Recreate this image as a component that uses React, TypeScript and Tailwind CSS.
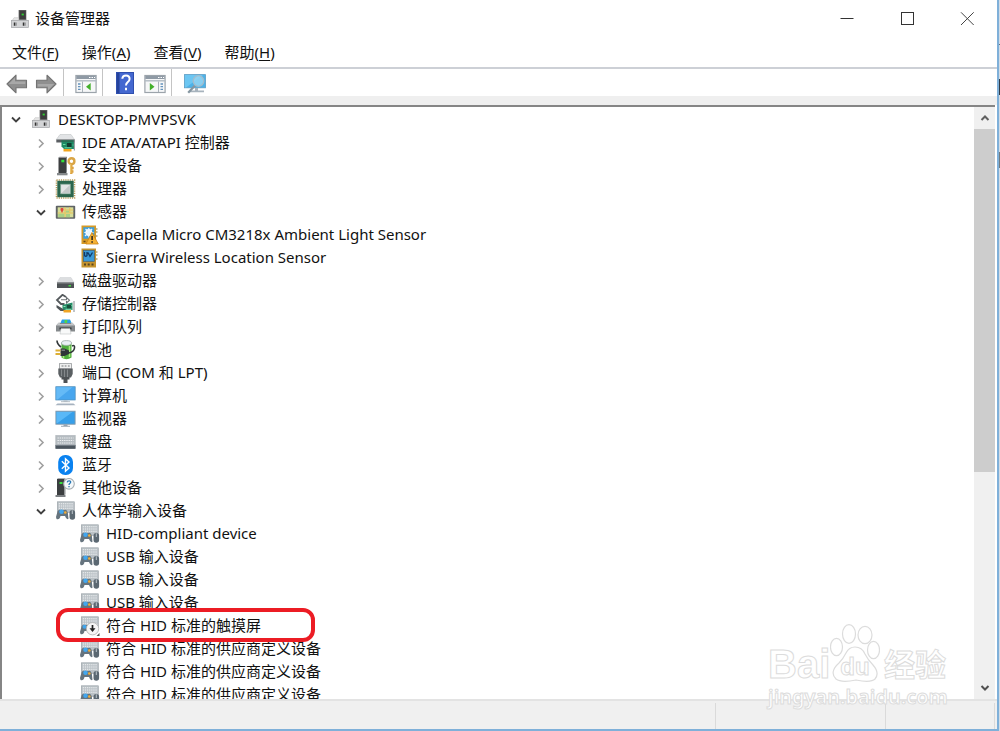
import React from "react";

type IconProps = { className?: string };
type IconType = (props: IconProps) => React.JSX.Element;

function Svg({ children, className = "h-5 w-[21px]" }: { children: React.ReactNode; className?: string }) {
  return (
    <svg viewBox="0 0 20 20" className={`block shrink-0 ${className}`} aria-hidden="true">
      {children}
    </svg>
  );
}

const ComputerRoot: IconType = ({ className }) => (
  <Svg className={className}>
    <rect x="8.5" y="0" width="8.5" height="11.5" fill="#5c5c5c" />
    <rect x="9.5" y="1" width="6.8" height="9.5" fill="#3d3d3d" />
    <rect x="11.8" y="4" width="2.4" height="2" fill="#2fd02f" />
    <path d="M3.5 8.5H8.5V11H17L19 12H1Z" fill="#e6e6e6" stroke="#b8b8b8" strokeWidth=".5" />
    <rect x=".5" y="11.5" width="19" height="8" fill="#d3d4d6" stroke="#a4a5a8" strokeWidth=".8" />
    <path d="M4 13.8v3.6M14 13.8v3.6" stroke="#333" strokeWidth="1.8" />
    <path d="M5.8 13.8v3.6M15.8 13.8v3.6" stroke="#8f9092" strokeWidth="1.2" />
  </Svg>
);

const IdeIcon: IconType = () => (
  <Svg>
    <path d="M4.5 1.5H15.5L19 6.5H.8Z" fill="#e2e4e6" stroke="#b9bdbf" strokeWidth=".5" />
    <path d="M.8 6.5H19V9.5H.8Z" fill="#5a5e62" />
    <path d="M6 7.5H18.5V16H8.5L6 13.5Z" fill="#1d8a64" />
    <path d="M6 7.5H18.5V9H6Z" fill="#2b6f55" />
    <rect x="11.5" y="10" width="4.5" height="4" fill="#123d30" />
    <path d="M7.5 11.5h2.5M17 12h1M9 14.8h7" stroke="#6ad9a5" strokeWidth="1" />
    <path d="M8 16H16V18.5H8Z" fill="#f0a51e" />
    <path d="M18.8 6.5V17.5" stroke="#858b8f" strokeWidth="1" />
  </Svg>
);

const SecurityIcon: IconType = () => (
  <Svg>
    <path d="M3 1.5H10.5V17H3Z" fill="#3c3f40" />
    <path d="M3 1.5L4 .8H11.5V16.5L10.5 17V1.5Z" fill="#85898b" />
    <rect x="5.8" y="3.8" width="3" height="2.5" fill="#31e33b" />
    <path d="M1.5 17H12V19.3H1.5Z" fill="#85898b" />
    <circle cx="16" cy="5.2" r="2.9" fill="none" stroke="#d9a545" strokeWidth="2.4" />
    <path d="M15.8 8V18M16 12H18.2M16 15.5H18" stroke="#dca341" strokeWidth="2.4" />
    <path d="M15.2 8V17" stroke="#f2cf78" strokeWidth=".8" />
  </Svg>
);

const CpuIcon: IconType = () => (
  <Svg>
    <rect x="1" y="1" width="18" height="18" fill="none" stroke="#b89b58" strokeWidth="1.6" strokeDasharray="1.2 1" />
    <rect x="1.8" y="1.8" width="16.4" height="16.4" fill="#2b664d" />
    <rect x="5.2" y="5.2" width="9.6" height="9.6" fill="#e3e5e5" stroke="#87ab9b" strokeWidth=".7" />
    <path d="M6 14.3L14.3 6V14.3Z" fill="#c4c9c9" />
  </Svg>
);

const SensorGroupIcon: IconType = () => (
  <Svg>
    <rect x=".3" y="3.8" width="19.4" height="13" rx="1" fill="#5f6366" />
    <rect x="2.2" y="5.3" width="15.6" height="10" fill="#d6dd9a" />
    <path d="M9.5 5.3V15.3M2.2 11H17.8M14.3 5.3V11M9.5 8H17.8" stroke="#e8c45c" strokeWidth="1.1" />
    <path d="M2.8 11.8H8.8V15.3H2.8ZM10.3 8.7H13.5V10.4H10.3ZM10.5 12H14.5V15.3H10.5Z" fill="#a8cf84" />
    <rect x="5" y="6" width="3" height="3" rx="1" fill="#e0463a" />
    <path d="M5.5 9L6.5 11L7.5 9" fill="#e0463a" />
  </Svg>
);

const SensorWarnIcon: IconType = () => (
  <Svg>
    <path d="M2 .5H16.5V19H2Z" fill="#d79a26" />
    <path d="M16.5 4H18M16.5 7H18M16.5 11H18" stroke="#87702c" strokeWidth="1" />
    <rect x="3.8" y="2.2" width="11" height="11.5" fill="#3d9edb" />
    <circle cx="9.3" cy="7.5" r="3.4" fill="#fff" />
    <path d="M9.3 3V12.5M4.8 7.5H14M6 4L13 11M12.6 4L5.5 11" stroke="#e8f6ff" strokeWidth="1.2" />
    <path d="M4 16.5h2" stroke="#60461a" strokeWidth="1.5" />
    <path d="M12.5 7.5L18.8 19H6.4Z" fill="#f6b234" stroke="#c98215" strokeWidth=".8" />
    <path d="M12.6 11V15M12.6 16.2V17.8" stroke="#222" strokeWidth="1.5" />
  </Svg>
);

const SensorIcon: IconType = () => (
  <Svg>
    <path d="M2 .5H16.5V19.5H2Z" fill="#c6942e" />
    <path d="M16.5 4H18M16.5 7H18M16.5 11H18" stroke="#87702c" strokeWidth="1" />
    <rect x="3.8" y="2.3" width="11" height="11" fill="#3b9ad8" stroke="#3c5f78" strokeWidth=".7" />
    <path d="M5 4V7.5Q6.3 9 7.5 7.5V4M8.5 4.5L10.5 8.5L13 4.5" fill="none" stroke="#103a68" strokeWidth="1.3" />
    <path d="M4.5 16.4h2M8.2 16.4h2M12 16.4h2" stroke="#57451e" strokeWidth="2" />
  </Svg>
);

const DiskIcon: IconType = () => (
  <Svg>
    <path d="M4.5 6.5H15.5L18.5 11.5H1.5Z" fill="#dcdee0" stroke="#c3c6c9" strokeWidth=".4" />
    <rect x="1.5" y="11.5" width="17" height="5.5" fill="#4e5255" />
    <path d="M1.5 12H18.5" stroke="#85898c" strokeWidth="1" />
    <rect x="13" y="14" width="2.5" height="1.5" fill="#45d842" />
  </Svg>
);

const StorageIcon: IconType = () => (
  <Svg>
    <path d="M10.5 3L7 .8L1.5 6L5.5 10H9" fill="none" stroke="#54595c" strokeWidth="1.8" />
    <path d="M5.5 5.8H11V3.5L14 6.2L11 9V7" fill="none" stroke="#6c7174" strokeWidth="1.1" />
    <path d="M1 11L7 14.5H10V17H5L1 13.5Z" fill="#4e5457" />
    <path d="M7 11L17 8.5V16H9L7 14.5Z" fill="#268c67" />
    <rect x="11.5" y="11" width="4" height="3.5" fill="#164f3b" />
    <path d="M8 12.5h2M16 11.5h1M10 15.3h6" stroke="#8de0b5" strokeWidth="1" />
    <path d="M8 16H15.5V18.5H8Z" fill="#efa424" />
    <path d="M18.5 7V18" stroke="#a0a4a7" strokeWidth="1.3" />
  </Svg>
);

const PrinterIcon: IconType = () => (
  <Svg>
    <path d="M6.5 2.5H14.5L16.5 7H4.5Z" fill="#289ee5" />
    <path d="M9 3H12L11.5 6H9Z" fill="#53d44b" />
    <path d="M3 6H17L19.5 8.5V14.5H.5V8.5Z" fill="#85898c" />
    <path d="M5 5.5L4 7H16L15 5.5H17L19 8.5H1L3 5.5Z" fill="#c5c8ca" />
    <path d="M4 10.5H16V12.5H4Z" fill="#2e3335" />
    <path d="M5.5 11.5H14.5L15.5 17H4.5Z" fill="#f8f9f9" stroke="#b4b8ba" strokeWidth=".5" />
  </Svg>
);

const BatteryIcon: IconType = () => (
  <Svg>
    <path d="M6 3V17.5Q11 21 16 17.5V3Z" fill="#4fae3c" />
    <path d="M14 6V17M8 15.5V18.5" stroke="#a8ec7c" strokeWidth="1.5" />
    <ellipse cx="11" cy="3" rx="5" ry="2.4" fill="#eaf0f4" stroke="#9caba6" strokeWidth=".8" />
    <path d="M1.5 .5Q1.5 4 5.5 7M16.5 6Q19.5 4.5 19 8Q18.5 12 13 13" fill="none" stroke="#303638" strokeWidth="1.6" />
    <path d="M5 8.5H9L13.5 10.5V14L9 16H5Z" fill="#303638" />
    <path d="M6 10.2H9.5" stroke="#899093" strokeWidth="1.2" />
    <path d="M0 10.5H5M0 14H5" stroke="#ddaf35" strokeWidth="1.8" />
  </Svg>
);

const PortIcon: IconType = () => (
  <Svg>
    <rect x="4" y=".6" width="12" height="5.4" fill="#f0f1f1" stroke="#a0a3a5" strokeWidth=".9" />
    <path d="M6 3H8M9.2 3H11M12.4 3H14.2" stroke="#707476" strokeWidth="1.1" />
    <path d="M2.8 5.5H17.2V11L15.5 14.5H4.5L2.8 11Z" fill="#5a5f62" />
    <path d="M6 6.5V13M9 6.5V14M12 6.5V14" stroke="#85898c" strokeWidth="1" />
    <path d="M6 14H14V16.5H12V20H8V16.5H6Z" fill="#4d5154" />
  </Svg>
);

const PcIcon: IconType = () => (
  <Svg>
    <rect x=".3" y=".7" width="19.4" height="13.3" fill="#48a6ee" stroke="#4e8db9" strokeWidth=".7" />
    <path d="M.8 1.2H17L2 13.5H.8Z" fill="#75c5fa" opacity=".65" />
    <path d="M8 14.5H12V16H8Z" fill="#aeb7bf" />
    <path d="M5.5 15.7H14.5" stroke="#b3bdc5" strokeWidth="1" />
    <path d="M2 17.5H18L20 19.3H0Z" fill="#a6b2bf" />
  </Svg>
);

const MonitorIcon: IconType = () => (
  <Svg>
    <rect x=".4" y="2.2" width="19.2" height="13" fill="#379fe9" stroke="#8399aa" strokeWidth=".9" />
    <path d="M1 3H17L2 14H1Z" fill="#6bc6ff" opacity=".65" />
    <path d="M8 15.5H12V17H8Z" fill="#91a0ad" />
    <path d="M5.5 17.3H14.5" stroke="#a4afb9" strokeWidth="1.1" />
  </Svg>
);

const KeyboardIcon: IconType = () => (
  <Svg>
    <rect x=".3" y="3.5" width="19.4" height="13" fill="#b5bcc1" stroke="#a0a8ae" strokeWidth=".5" />
    <path d="M2 6H18M2 8.5H18M2 11H18" stroke="#eef0f2" strokeWidth="1.2" strokeDasharray="1.4 .8" />
    <path d="M0 13H20V16.8H0Z" fill="#4b555e" />
    <path d="M0 13.3H20" stroke="#89939b" strokeWidth=".8" />
  </Svg>
);

const BluetoothIcon: IconType = () => (
  <Svg>
    <rect x="2.7" y="0" width="14.8" height="20" rx="7" fill="#0a82f0" />
    <path d="M6.3 6.3L13.5 13L10 16.2V3.8L13.5 7L6.3 13.7" fill="none" stroke="#fff" strokeWidth="1.4" />
  </Svg>
);

const OtherIcon: IconType = () => (
  <Svg>
    <path d="M1.5 1H9V17H1.5Z" fill="#3b3e40" />
    <path d="M1.5 1L2.5 .3H10V16.5L9 17V1Z" fill="#8d9294" />
    <rect x="4" y="4" width="3" height="2" fill="#37df3d" />
    <path d="M0 17H10V19H0Z" fill="#7c8083" />
    <circle cx="13.5" cy="5.8" r="5.3" fill="#f5f8fa" stroke="#a6aeb3" strokeWidth="1.1" />
    <path d="M11.7 4.4Q12 2.8 13.7 2.9Q15.6 3.1 15 4.8Q13.5 5.8 13.5 7M13.5 8.1V9.2" fill="none" stroke="#2878b5" strokeWidth="1.3" />
  </Svg>
);

function HidBase() {
  return (
    <>
      <rect x="1.8" y=".8" width="17" height="10.5" fill="#bac1c6" stroke="#98a0a5" strokeWidth=".6" />
      <path d="M3.3 2.8H17.5M3.3 5H17.5M3.3 7.2H17.5" stroke="#f2f4f5" strokeWidth="1.1" strokeDasharray="1.3 .8" />
      <path d="M2 10.5Q3 8.3 5 9H9Q11.5 8.3 12.3 11.5L13 17.8Q11 19.3 9.5 15H5Q4 19.3 1 18L.5 16Z" fill="#66747e" />
    </>
  );
}

const HidIcon: IconType = () => (
  <Svg>
    <HidBase />
    <rect x="14" y="9" width="5.6" height="9.7" rx="2.7" fill="#5b6872" />
    <path d="M16.8 9.3V13" stroke="#c7d0d6" strokeWidth=".9" />
    <circle cx="6" cy="10.8" r="2.3" fill="#42a6ed" />
    <circle cx="9.8" cy="11.5" r="1.3" fill="#f1ae39" />
  </Svg>
);

const HidDisabledIcon: IconType = () => (
  <Svg>
    <HidBase />
    <circle cx="5" cy="10.8" r="2" fill="#42a6ed" />
    <circle cx="13" cy="12.7" r="6.2" fill="#f6f6f6" stroke="#b0b0b0" strokeWidth=".8" />
    <path d="M13 9V14" stroke="#222" strokeWidth="1.7" />
    <path d="M10 12.3H16L13 16Z" fill="#222" />
    <path d="M20 17V20H17Z" fill="#555" />
  </Svg>
);

function ArrowIcon({ forward = false }: { forward?: boolean }) {
  return (
    <svg viewBox="0 0 22 20" className={forward ? "block h-5 w-[22px] rotate-180" : "block h-5 w-[22px]"} aria-hidden="true">
      <path d="M1 10L10 1.2V6.2H20.5V13.8H10V18.8Z" fill="#8f8f8f" stroke="#737373" strokeWidth="1.1" strokeLinejoin="round" />
      <path d="M2.7 10L9 3.7V7.5H19.3V10Z" fill="#a8a8a8" />
    </svg>
  );
}

function PanelIcon({ right = false }: { right?: boolean }) {
  return (
    <svg viewBox="0 0 22 20" className="block h-5 w-[22px]" aria-hidden="true">
      <rect x=".9" y="1.5" width="20.2" height="17" fill="#f6f7f8" stroke="#9ca4ab" strokeWidth="1.2" />
      <rect x="1.3" y="2" width="19.4" height="3" fill="#8f9aa5" />
      <path d="M14 3.5h1.5M16.5 3.5H18M19 3.5h1" stroke="#fff" strokeWidth="1" />
      <path d="M1 6.8H21" stroke="#b1bac2" strokeWidth="1.4" />
      {right ? (
        <>
          <path d="M14.5 7.5V18" stroke="#aab3ba" strokeWidth="1" />
          <path d="M16.5 10H19M16.5 12.7H19M16.5 15.4H19" stroke="#6594bd" strokeWidth="1.3" />
          <path d="M5.8 9L10.5 12.8L5.8 16.5Z" fill="#43b02b" />
        </>
      ) : (
        <>
          <path d="M7.5 7.5V18" stroke="#aab3ba" strokeWidth="1" />
          <path d="M3 10H5.5M3 12.7H5.5M3 15.4H5.5" stroke="#6594bd" strokeWidth="1.3" />
          <path d="M15.7 9L11 12.8L15.7 16.5Z" fill="#43b02b" />
        </>
      )}
    </svg>
  );
}

function HelpIcon() {
  return (
    <svg viewBox="0 0 18 22" className="block h-[22px] w-[18px]" aria-hidden="true">
      <rect x=".5" y=".5" width="17" height="21" fill="#4468d0" stroke="#2f4fae" />
      <path d="M1 1H3.5V21H1Z" fill="#25439c" />
      <path d="M6.3 6.8Q6.5 3.5 10 3.5Q13.6 3.5 13.6 7Q13.6 9 11.5 10.3Q10 11.3 10 13.5M10 15.8V18.2" fill="none" stroke="#fff" strokeWidth="2" />
    </svg>
  );
}

function ScanIcon() {
  return (
    <svg viewBox="0 0 22 20" className="block h-5 w-[22px]" aria-hidden="true">
      <rect x=".5" y=".6" width="21" height="13.2" fill="#4db2e8" stroke="#5d9dc4" strokeWidth=".8" />
      <path d="M1 1H19L2 13.5H1Z" fill="#82d3f8" opacity=".6" />
      <path d="M11 14H14V16.5H20V18.3H6V16.5H11Z" fill="#a7b3bd" />
      <path d="M11 11.5L4.2 18.8" stroke="#8596a1" strokeWidth="2.3" />
      <circle cx="14.5" cy="7" r="5.3" fill="#93d3f2" fillOpacity=".85" stroke="#a3bccb" strokeWidth="1.3" />
    </svg>
  );
}

function Chevron({ open }: { open: boolean }) {
  return (
    <svg viewBox="0 0 10 10" className="block h-2.5 w-2.5" aria-hidden="true">
      {open ? (
        <path d="M1 3.5L5 7.5L9 3.5" fill="none" stroke="#404040" strokeWidth="1.8" />
      ) : (
        <path d="M3 1.5L7 5.5L3 9.5" fill="none" stroke="#a0a0a0" strokeWidth="1.6" />
      )}
    </svg>
  );
}

type Device = { label: string; icon: IconType; open?: boolean; children?: Device[]; marked?: boolean };

const devices: Device[] = [
  { label: "IDE ATA/ATAPI 控制器", icon: IdeIcon },
  { label: "安全设备", icon: SecurityIcon },
  { label: "处理器", icon: CpuIcon },
  {
    label: "传感器",
    icon: SensorGroupIcon,
    open: true,
    children: [
      { label: "Capella Micro CM3218x Ambient Light Sensor", icon: SensorWarnIcon },
      { label: "Sierra Wireless Location Sensor", icon: SensorIcon },
    ],
  },
  { label: "磁盘驱动器", icon: DiskIcon },
  { label: "存储控制器", icon: StorageIcon },
  { label: "打印队列", icon: PrinterIcon },
  { label: "电池", icon: BatteryIcon },
  { label: "端口 (COM 和 LPT)", icon: PortIcon },
  { label: "计算机", icon: PcIcon },
  { label: "监视器", icon: MonitorIcon },
  { label: "键盘", icon: KeyboardIcon },
  { label: "蓝牙", icon: BluetoothIcon },
  { label: "其他设备", icon: OtherIcon },
  {
    label: "人体学输入设备",
    icon: HidIcon,
    open: true,
    children: [
      { label: "HID-compliant device", icon: HidIcon },
      { label: "USB 输入设备", icon: HidIcon },
      { label: "USB 输入设备", icon: HidIcon },
      { label: "USB 输入设备", icon: HidIcon },
      { label: "符合 HID 标准的触摸屏", icon: HidDisabledIcon, marked: true },
      { label: "符合 HID 标准的供应商定义设备", icon: HidIcon },
      { label: "符合 HID 标准的供应商定义设备", icon: HidIcon },
      { label: "符合 HID 标准的供应商定义设备", icon: HidIcon },
    ],
  },
];

function LeafRow({ device }: { device: Device }) {
  const Icon = device.icon;
  return (
    <li role="treeitem" className="relative flex h-[23px] items-center gap-1.5 pl-[23px]">
      <Icon />
      <span>{device.label}</span>
      {device.marked && (
        <span className="pointer-events-none absolute -top-1.5 left-0 z-10 h-[34px] w-[259px] rounded-xl border-4 border-[#ec1c24]" />
      )}
    </li>
  );
}

function GroupRow({ device }: { device: Device }) {
  const Icon = device.icon;
  return (
    <li role="treeitem" aria-expanded={Boolean(device.open)}>
      <div className="flex h-[23px] items-center">
        <button type="button" aria-label={device.label} className="mr-[9px] flex h-5 w-2.5 items-center justify-center">
          <Chevron open={Boolean(device.open)} />
        </button>
        <Icon />
        <span className="ml-1.5">{device.label}</span>
      </div>
      {device.children && (
        <ul role="group" className="pl-5">
          {device.children.map((child, i) => (
            <LeafRow key={i} device={child} />
          ))}
        </ul>
      )}
    </li>
  );
}

const menus = [
  ["文件", "F"],
  ["操作", "A"],
  ["查看", "V"],
  ["帮助", "H"],
];

function Separator() {
  return <span className="h-[27px] w-px shrink-0 bg-[#c4c4c4]" />;
}

function Watermark() {
  return (
    <div className="pointer-events-none absolute right-[49px] bottom-5 z-20 w-[180px] text-white [-webkit-text-stroke:1px_#dcdcdc]">
      <div className="flex h-[62px] items-end">
        <span className="w-[62px] font-['Liberation_Sans',sans-serif] text-[40px] leading-[42px] font-bold">Bai</span>
        <span className="relative mr-1 flex h-[62px] w-[50px] shrink-0 items-end justify-center pb-1">
          <svg viewBox="0 0 50 62" className="absolute inset-0 h-[62px] w-[50px]" fill="#fff" stroke="#dcdcdc" strokeWidth="1.2" aria-hidden="true">
            <ellipse cx="6.5" cy="24" rx="6" ry="8.7" />
            <ellipse cx="19" cy="11" rx="6.5" ry="9.3" />
            <ellipse cx="35" cy="12" rx="7" ry="8.7" />
            <ellipse cx="43.5" cy="27" rx="6" ry="8.7" />
            <path d="M25 24Q32 24 35 31Q38 37 43 42Q50 50 45 56Q41 60 26 57Q11 60 6 56Q-1 49 9 40Q13 36 16 30Q19 24 25 24Z" />
          </svg>
          <span className="relative font-['Liberation_Sans',sans-serif] text-[24px] leading-7 font-bold">du</span>
        </span>
        <span className="shrink-0 text-[31px] leading-[42px] font-bold">经验</span>
      </div>
      <div className="text-[20px] leading-6 font-semibold">jingyan.baidu.com</div>
    </div>
  );
}

export default function App() {
  return (
    <div className="flex h-screen min-h-96 bg-[#dbe2e9] font-['Noto_Sans','Noto_Sans_CJK_SC',sans-serif] text-[15px] leading-[23px] text-[#111]">
      <div className="relative flex min-w-0 flex-1 flex-col border-r-2 border-b-2 border-[#7fb0d9] bg-white">
        <header className="flex h-[37px] shrink-0 items-center pl-[11px]">
          <ComputerRoot className="h-5 w-[18px]" />
          <h1 className="ml-1.5 flex-1">设备管理器</h1>
          <button type="button" aria-label="最小化" className="flex h-9 w-[60px] items-center justify-center">
            <svg viewBox="0 0 14 14" className="h-3.5 w-3.5" aria-hidden="true"><path d="M.5 6.5H13.5" stroke="#333" /></svg>
          </button>
          <button type="button" aria-label="最大化" className="flex h-9 w-[60px] items-center justify-center">
            <svg viewBox="0 0 14 14" className="h-3.5 w-3.5" aria-hidden="true"><rect x="1.5" y=".5" width="12" height="12" fill="none" stroke="#333" /></svg>
          </button>
          <button type="button" aria-label="关闭" className="flex h-9 w-[60px] items-center justify-center">
            <svg viewBox="0 0 14 14" className="h-3.5 w-3.5" aria-hidden="true"><path d="M1 .3L13.7 13M13.7 .3L1 13" stroke="#444" /></svg>
          </button>
        </header>

        <nav className="flex h-8 shrink-0 items-center gap-[23px] border-b-2 border-[#cdd0d6] pl-3">
          {menus.map(([name, key]) => (
            <button type="button" key={key}>
              {name}(<u className="underline-offset-2">{key}</u>)
            </button>
          ))}
        </nav>

        <div className="flex h-[27px] shrink-0 items-end pl-1.5" role="toolbar">
          <button type="button" aria-label="后退" className="pb-0.5"><ArrowIcon /></button>
          <button type="button" aria-label="前进" className="mr-1.5 ml-[7px] pb-0.5"><ArrowIcon forward /></button>
          <Separator />
          <button type="button" aria-label="控制台树" className="mr-[5px] ml-[11px] pb-0.5"><PanelIcon /></button>
          <Separator />
          <button type="button" aria-label="帮助" className="ml-[13px] pb-0.5"><HelpIcon /></button>
          <button type="button" aria-label="操作窗格" className="mr-[5px] ml-2.5 pb-0.5"><PanelIcon right /></button>
          <Separator />
          <button type="button" aria-label="扫描检测硬件改动" className="ml-3 pb-0.5"><ScanIcon /></button>
        </div>

        <div className="h-[9px] shrink-0 bg-[#efefef]" />

        <main className="mr-0.5 flex min-h-0 flex-1 border-t-2 border-l-2 border-[#858585]">
          <div className="min-w-0 flex-1 overflow-hidden pl-[9px]">
            <ul role="tree">
              <li role="treeitem" aria-expanded="true">
                <div className="flex h-6 items-center">
                  <button type="button" aria-label="DESKTOP-PMVPSVK" className="mr-[11px] flex h-5 w-2.5 items-center justify-center">
                    <Chevron open />
                  </button>
                  <ComputerRoot className="h-5 w-[18px]" />
                  <span className="ml-2">DESKTOP-PMVPSVK</span>
                </div>
                <ul role="group" className="pl-[25px]">
                  {devices.map((device) => (
                    <GroupRow key={device.label} device={device} />
                  ))}
                </ul>
              </li>
            </ul>
          </div>
          <div className="flex w-[21px] shrink-0 flex-col bg-[#f0f0f0]">
            <button type="button" aria-label="向上滚动" className="flex h-[22px] shrink-0 items-center justify-center">
              <svg viewBox="0 0 10 10" className="h-2.5 w-2.5" aria-hidden="true"><path d="M1.5 7L5 3.5L8.5 7" fill="none" stroke="#606060" strokeWidth="2" /></svg>
            </button>
            <div className="flex-[343] bg-[#cdcdcd]" />
            <div className="flex-[205]" />
            <button type="button" aria-label="向下滚动" className="flex h-[22px] shrink-0 items-center justify-center">
              <svg viewBox="0 0 10 10" className="h-2.5 w-2.5" aria-hidden="true"><path d="M1.5 3L5 6.5L8.5 3" fill="none" stroke="#505050" strokeWidth="2" /></svg>
            </button>
          </div>
        </main>

        <footer className="flex h-[30px] shrink-0 border-t-2 border-[#e3e3e3] bg-[#f0f0f0] pt-0.5">
          <div className="flex-1" />
          <div className="w-[170px] border-l border-[#dadada]" />
          <div className="w-[110px] border-x border-[#dadada]" />
          <div className="w-0.5" />
        </footer>
        <Watermark />
      </div>
      <div className="flex w-px shrink-0 flex-col bg-[#d3dce6]">
        <div className="mt-11 h-px bg-[#607080]" />
        <div className="mt-[34px] h-4 bg-[#303c48]" />
        <div className="mt-[57px] h-4 bg-[#707a80]" />
      </div>
    </div>
  );
}
